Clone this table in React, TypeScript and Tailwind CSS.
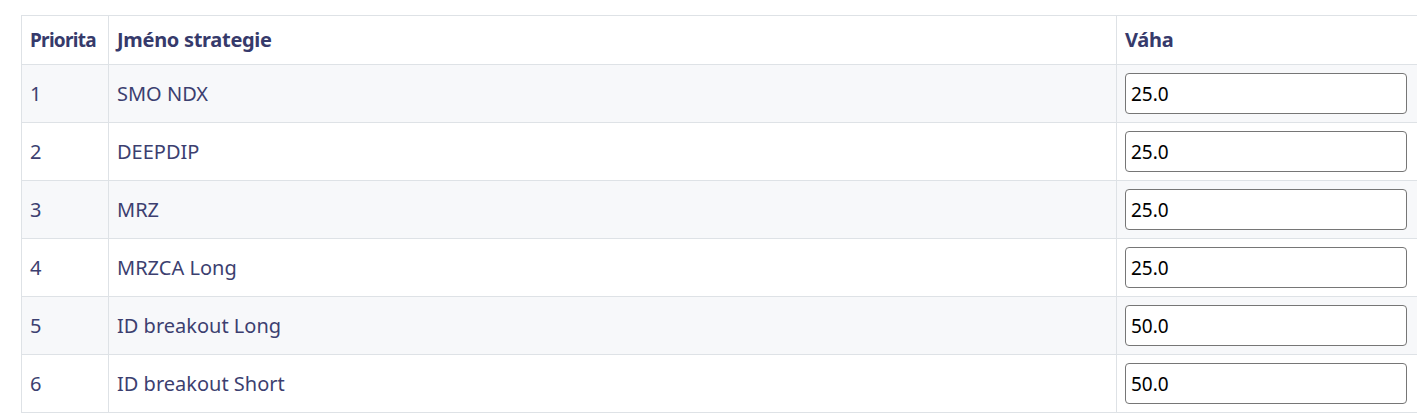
import React from "react";

const rows = [
  {p: 1, name: "SMO NDX", w: "25.0"},
  {p: 2, name: "DEEPDIP", w: "25.0"},
  {p: 3, name: "MRZ", w: "25.0"},
  {p: 4, name: "MRZCA Long", w: "25.0"},
  {p: 5, name: "ID breakout Long", w: "50.0"},
  {p: 6, name: "ID breakout Short", w: "50.0"},
];

const App: React.FC = () => {
  return (
    <div className="min-h-screen bg-white pt-[15px] pl-[21px] overflow-hidden font-['Noto_Sans',sans-serif]">
      <table className="w-[1397px] border-collapse table-fixed text-[20px] text-[#3c3f70]">
        <colgroup>
          <col className="w-[87px]" />
          <col className="w-[1008px]" />
          <col className="w-[302px]" />
        </colgroup>
        <thead>
          <tr className="h-[49px]">
            <th className="border border-[#dee2e6] pl-2 pr-0 text-left text-[19px] font-bold tracking-[-0.7px] text-[#363a6b]">Priorita</th>
            <th className="border border-[#dee2e6] px-2 text-left text-[20px] font-bold tracking-[-0.3px] text-[#363a6b]">Jméno strategie</th>
            <th className="border border-[#dee2e6] px-2 text-left text-[20px] font-bold tracking-[-0.3px] text-[#363a6b]">Váha</th>
          </tr>
        </thead>
        <tbody>
          {rows.map((r, i) => (
            <tr key={r.p} className={i % 2 === 0 ? "bg-[#f7f8fa]" : "bg-white"}>
              <td className="border border-[#dee2e6] px-2">{r.p}</td>
              <td className="border border-[#dee2e6] px-2">{r.name}</td>
              <td className="border border-[#dee2e6] p-2">
                <input
                  type="text"
                  defaultValue={r.w}
                  className="block w-[282px] h-[41px] border border-[#767676] rounded-[4px] bg-white px-[5px] text-black text-[19px]"
                />
              </td>
            </tr>
          ))}
        </tbody>
      </table>
    </div>
  );
};

export default App;
